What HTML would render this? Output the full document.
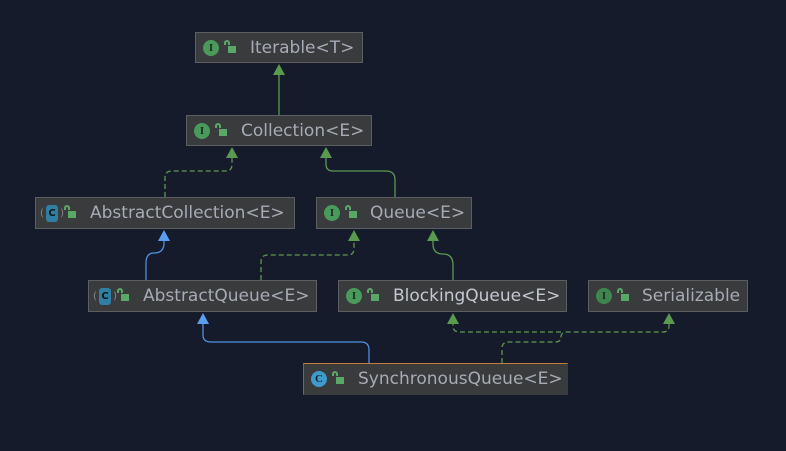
<!DOCTYPE html>
<html><head><meta charset="utf-8"><style>
html,body{margin:0;padding:0;width:786px;height:451px;background:#161b2c;overflow:hidden;font-family:"DejaVu Sans","Liberation Sans",sans-serif}
.b{position:absolute;box-sizing:border-box;background:#3a3b3d;border:1px solid #5c5e61;height:32px;color:#a6abb5;font-size:17px;line-height:31px;white-space:nowrap}
.b .i{position:absolute;left:7px;top:7px;width:16px;height:16px;border-radius:50%;background:#4a9a5b;color:#1e2a20;font-family:"Liberation Serif",serif;font-weight:bold;font-size:11px;line-height:16px;text-align:center}
.b .c{position:absolute;left:10px;top:7px;width:12px;height:17px;border-radius:3px;background:#2e7fa3;color:#111;font-size:10px;line-height:17px;text-align:center;font-weight:bold}
.b .c:before{content:"(";position:absolute;left:-6px;top:0;color:#888;font-weight:normal}
.b .c:after{content:")";position:absolute;right:-6px;top:0;color:#888;font-weight:normal}
.b .k{position:absolute;left:32px;top:13px;width:8px;height:7px;background:#5aa867}
.b .k:before{content:"";position:absolute;left:-4px;top:-6px;height:5px;border:2px solid #5aa867;border-bottom:none;border-radius:3px 3px 0 0;box-sizing:border-box;width:6px}
.b .t{position:absolute;top:0}
</style></head><body>
<svg width="786" height="451" style="position:absolute;left:0;top:0">
<g fill="none" stroke-width="1.3">
<path d="M279 115 V72" stroke="#5a9a4e"/>
<path d="M165 197 V178 Q165 171 172 171 H226 Q232 171 232 164 V156" stroke="#5a9a4e" stroke-dasharray="5,3"/>
<path d="M395 197 V180 Q395 171 386 171 H333 Q326 171 326 164 V156" stroke="#5a9a4e"/>
<path d="M146 280 V263 Q146 253 154 253 Q164 253 164 243 V239" stroke="#4f8fe0"/>
<path d="M261 280 V262 Q261 255 268 255 H348 Q354 255 354 248 V239" stroke="#5a9a4e" stroke-dasharray="5,3"/>
<path d="M453 280 V265 Q453 254 443 254 Q433 254 433 244 V239" stroke="#5a9a4e"/>
<path d="M369 363 V350 Q369 342 361 342 H211 Q203 342 203 335 V322" stroke="#4f8fe0"/>
<path d="M502 363 V348 Q502 342 509 342 H555 Q561 342 561 337 Q561 332 567 332 H663 Q669 332 669 326 V322" stroke="#5a9a4e" stroke-dasharray="5,3"/>
<path d="M561 332 H460 Q453 332 453 326 V322" stroke="#5a9a4e" stroke-dasharray="5,3"/>
</g>
<g fill="#5a9a4e">
<path d="M279 64 L273 75 H285Z"/>
<path d="M232 147 L226 158 H238Z"/>
<path d="M326 147 L320 158 H332Z"/>
<path d="M354 230 L348 241 H360Z"/>
<path d="M433 230 L427 241 H439Z"/>
<path d="M453 313 L447 324 H459Z"/>
<path d="M669 313 L663 324 H675Z"/>
</g>
<g fill="#5b9ef0">
<path d="M164 230 L158 241 H170Z"/>
<path d="M203 313 L197 324 H209Z"/>
</g>
</svg>
<div class="b" style="left:195px;top:32px;width:168px;height:31px"><span class="i">I</span><span class="k"></span><span class="t" style="left:54px">Iterable&lt;T&gt;</span></div>
<div class="b" style="left:186px;top:115px;width:186px;height:31px"><span class="i">I</span><span class="k"></span><span class="t" style="left:54px">Collection&lt;E&gt;</span></div>
<div class="b" style="left:35px;top:197px;width:260px"><span class="c">C</span><span class="k"></span><span class="t" style="left:54px">AbstractCollection&lt;E&gt;</span></div>
<div class="b" style="left:316px;top:197px;width:156px"><span class="i">I</span><span class="k"></span><span class="t" style="left:53px">Queue&lt;E&gt;</span></div>
<div class="b" style="left:88px;top:280px;width:229px"><span class="c">C</span><span class="k"></span><span class="t" style="left:54px">AbstractQueue&lt;E&gt;</span></div>
<div class="b" style="left:338px;top:280px;width:229px;color:#c3c8d0"><span class="i">I</span><span class="k"></span><span class="t" style="left:54px">BlockingQueue&lt;E&gt;</span></div>
<div class="b" style="left:588px;top:280px;width:160px"><span class="i" style="background:#3f8550">I</span><span class="k"></span><span class="t" style="left:53px">Serializable</span></div>
<div class="b" style="left:303px;top:363px;width:265px;border-color:#c27c3c;border-bottom-color:#3a3b3d;border-left-color:#8a6040;border-right-color:#3a3b3d"><span class="i" style="background:#3e9ccc;color:#123">C</span><span class="k"></span><span class="t" style="left:54px">SynchronousQueue&lt;E&gt;</span></div>
</body></html>
